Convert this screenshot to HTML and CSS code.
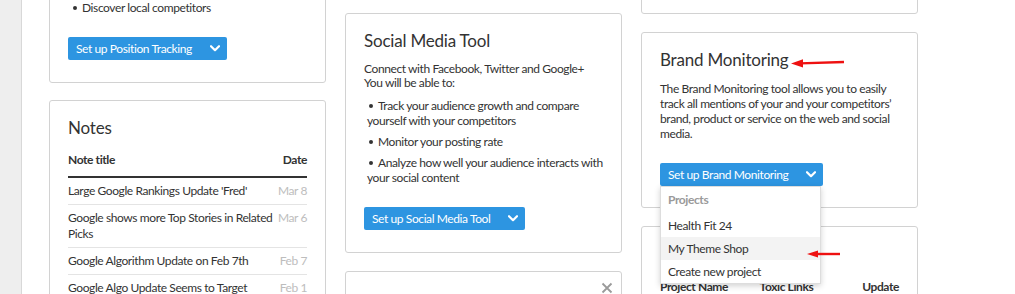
FILE: index.html
```html
<!DOCTYPE html>
<html lang="en">
<head>
<meta charset="utf-8">
<title>Dashboard</title>
<link rel="stylesheet" href="styles.css">
</head>
<body>
<div class="page">
  <aside class="sidebar"></aside>
  <main class="main">
    <div class="col col-left">
      <section class="card card-tracking">
        <ul class="bullets">
          <li>Discover local competitors</li>
        </ul>
        <div class="btn-wrap">
          <button class="btn">Set up Position Tracking<svg class="chev" viewBox="0 0 10 7" width="10" height="7"><path d="M1 1.2 L5 5.2 L9 1.2" /></svg></button>
        </div>
      </section>
      <section class="card card-notes">
        <h2 class="card-title">Notes</h2>
        <div class="notes">
          <div class="notes-head">
            <span>Note title</span>
            <span>Date</span>
          </div>
          <div class="note-row"><span class="note-title">Large Google Rankings Update 'Fred'</span><span class="note-date">Mar 8</span></div>
          <div class="note-row"><span class="note-title">Google shows more Top Stories in Related Picks</span><span class="note-date">Mar 6</span></div>
          <div class="note-row"><span class="note-title">Google Algorithm Update on Feb 7th</span><span class="note-date">Feb 7</span></div>
          <div class="note-row"><span class="note-title">Google Algo Update Seems to Target</span><span class="note-date">Feb 1</span></div>
        </div>
      </section>
    </div>

    <div class="col col-mid">
      <section class="card">
        <h2 class="card-title">Social Media Tool</h2>
        <p class="desc desc-tight">Connect with Facebook, Twitter and Google+<br>You will be able to:</p>
        <ul class="bullets bullets-list">
          <li>Track your audience growth and compare yourself with your competitors</li>
          <li>Monitor your posting rate</li>
          <li>Analyze how well your audience interacts with your social content</li>
        </ul>
        <div class="btn-wrap">
          <button class="btn">Set up Social Media Tool<svg class="chev" viewBox="0 0 10 7" width="10" height="7"><path d="M1 1.2 L5 5.2 L9 1.2" /></svg></button>
        </div>
      </section>
      <section class="card card-closable">
        <svg class="close" viewBox="0 0 12 12" width="12" height="12"><path d="M1.5 1.5 L10.5 10.5 M10.5 1.5 L1.5 10.5" /></svg>
      </section>
    </div>

    <div class="col col-right">
      <section class="card card-stub"></section>
      <section class="card card-brand">
        <h2 class="card-title">Brand Monitoring</h2>
        <svg class="annot annot-title" viewBox="0 0 54 10" width="54" height="10"><path class="annot-line" d="M9 5.4 L53 4" /><polygon points="0,5.6 12,1.2 12,9.6" /></svg>
        <p class="desc">The Brand Monitoring tool allows you to easily track all mentions of your and your competitors’ brand, product or service on the web and social media.</p>
        <div class="btn-wrap">
          <button class="btn">Set up Brand Monitoring<svg class="chev" viewBox="0 0 10 7" width="10" height="7"><path d="M1 1.2 L5 5.2 L9 1.2" /></svg></button>
          <div class="dropdown">
            <div class="dd-head">Projects</div>
            <div class="dd-item">Health Fit 24</div>
            <div class="dd-item dd-hover">My Theme Shop</div>
            <div class="dd-item">Create new project</div>
            <svg class="annot annot-menu" viewBox="0 0 34 10" width="34" height="10"><path class="annot-line" d="M9 5 L33 5" /><polygon points="0,5 11,1.5 11,8.5" /></svg>
          </div>
        </div>
      </section>
      <section class="card card-audit">
        <div class="audit-head">
          <span>Project Name</span>
          <span>Toxic Links</span>
          <span>Update</span>
        </div>
      </section>
    </div>
  </main>
</div>
</body>
</html>
```

FILE: styles.css
```css
* { box-sizing: border-box; }

html, body {
  margin: 0;
  padding: 0;
  background: #ffffff;
}

body {
  font-family: "Lato", "Open Sans", "Noto Sans", sans-serif;
  font-size: 12px;
  letter-spacing: -0.4px;
  color: #333333;
  width: 1015px;
  height: 294px;
  overflow: hidden;
}

.page {
  display: flex;
  height: 294px;
  overflow: hidden;
}

.sidebar {
  width: 22px;
  flex: none;
  background: #eeeeee;
  border-right: 1px solid #d8d8d8;
}

.main {
  display: flex;
  align-items: flex-start;
  gap: 19px;
  padding-left: 27px;
}

.col {
  width: 277px;
  display: flex;
  flex-direction: column;
  gap: 18px;
}

.col-left { margin-top: -20px; gap: 17px; }
.col-mid { margin-top: 13px; }
.col-right { margin-top: -26px; }

.card {
  position: relative;
  background: #ffffff;
  border: 1px solid #d2d2d2;
  border-radius: 3px;
  padding: 16px 18px 22px 18px;
}

.card-tracking { padding-top: 19px; }

.card-title {
  margin: 0 0 10px 0;
  font-size: 17px;
  line-height: 22px;
  font-weight: 400;
  letter-spacing: -0.2px;
  color: #333333;
}

.desc {
  margin: 0;
  line-height: 15px;
}

.desc-tight { line-height: 14px; }

.bullets {
  margin: 0;
  padding: 0 0 0 3px;
  list-style: none;
}

.bullets li {
  line-height: 15px;
}

.bullets li::before {
  content: "";
  display: inline-block;
  width: 4px;
  height: 4px;
  border-radius: 50%;
  background: #333333;
  vertical-align: middle;
  margin: -2px 5px 0 2px;
}

.bullets-list { margin-top: 8px; }
.bullets-list li + li { margin-top: 6px; }

.btn-wrap {
  position: relative;
  margin-top: 22px;
  display: flex;
}

.btn {
  position: relative;
  height: 23px;
  padding: 0 35px 0 8px;
  border: 0;
  border-radius: 2px;
  background: #2d95e1;
  color: #ffffff;
  font-family: inherit;
  font-size: 12px;
  letter-spacing: -0.4px;
  line-height: 23px;
  text-align: left;
  white-space: nowrap;
}

.chev {
  position: absolute;
  right: 7px;
  top: 8px;
}

.chev path {
  fill: none;
  stroke: #ffffff;
  stroke-width: 2.2;
  stroke-linecap: round;
  stroke-linejoin: round;
}

.notes-head {
  display: flex;
  justify-content: space-between;
  margin-top: 13px;
  padding-bottom: 8px;
  border-bottom: 2px solid #333333;
  font-weight: 700;
  line-height: 16px;
}

.note-row {
  display: grid;
  grid-template-columns: 1fr auto;
  column-gap: 3px;
  padding: 5px 0;
  line-height: 16px;
  border-bottom: 1px solid #e4e4e4;
}

.note-date {
  color: #bdbdbd;
  text-align: right;
}

.card-stub { height: 40px; }

.card-closable { height: 60px; }

.close {
  position: absolute;
  top: 10px;
  right: 8px;
}

.close path {
  stroke: #9a9a9a;
  stroke-width: 1.8;
  fill: none;
}

.annot {
  position: absolute;
  overflow: visible;
}

.annot-line {
  stroke: #ee1111;
  stroke-width: 2.4;
  fill: none;
}

.annot polygon { fill: #ee1111; }

.annot-title {
  left: 149px;
  top: 25px;
}

.annot-menu {
  left: 146px;
  top: 62px;
}

.card-brand { padding-bottom: 21px; }

.dropdown {
  position: absolute;
  left: 0;
  top: 23px;
  width: 161px;
  background: #ffffff;
  border: 1px solid #dddddd;
  box-shadow: 0 2px 6px rgba(0, 0, 0, 0.18);
  z-index: 5;
}

.dd-head {
  height: 27px;
  line-height: 26px;
  padding-left: 7px;
  color: #9a9a9a;
  font-weight: 700;
}

.dd-item {
  height: 23px;
  line-height: 23px;
  padding-left: 7px;
  color: #333333;
}

.dd-hover { background: #f3f3f3; }

.card-audit { padding-top: 52px; }

.audit-head {
  display: flex;
  font-weight: 700;
  line-height: 16px;
}

.audit-head span:nth-child(1) { width: 100px; }
.audit-head span:nth-child(2) { width: 103px; }
```
